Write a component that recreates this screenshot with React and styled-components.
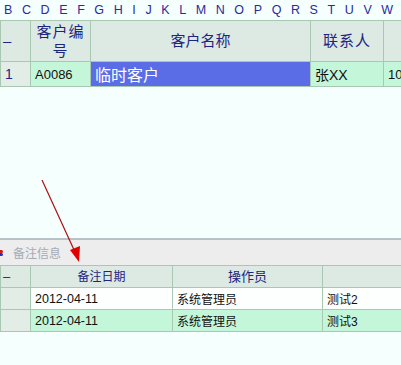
import React from 'react';
import styled, { createGlobalStyle } from 'styled-components';

const GlobalStyle = createGlobalStyle`
  html, body {
    margin: 0;
    padding: 0;
    background: #f5fffe;
    font-family: "Liberation Sans", Arial, "Noto Sans CJK SC", sans-serif;
  }
`;

const Page = styled.div`
  position: relative;
  width: 401px;
  height: 365px;
  overflow: hidden;
  background: #f5fffe;
  display: flex;
  flex-direction: column;
`;

const Letters = styled.div`
  height: 20px;
  display: flex;
  align-items: center;
  padding-left: 4px;
  gap: 9.6px;
  font-size: 12.5px;
  color: #2a2aa0;
  white-space: nowrap;
`;

const GridWrap = styled.div`
  width: 401px;
  overflow: hidden;
`;

const Table = styled.table`
  border-collapse: collapse;
  table-layout: fixed;
  width: ${p => p.width}px;
  font-family: "Liberation Sans", Arial, "Noto Sans CJK SC", sans-serif;
`;

const HeadCell = styled.th`
  height: ${p => p.h}px;
  padding: 0 2px;
  border: 1px solid #a9c8b1;
  background: #dde9e3;
  color: #1c2580;
  font-weight: normal;
  font-size: ${p => p.size}px;
  line-height: ${p => p.lh || 20}px;
  letter-spacing: ${p => p.ls || 0}px;
  text-align: ${p => p.align || 'center'};
  vertical-align: middle;
  overflow: hidden;
`;

const Cell = styled.td`
  height: ${p => p.h || 20}px;
  padding: 0 4px;
  border: 1px solid #a9c8b1;
  background: ${p => p.bg || 'transparent'};
  color: ${p => p.color || '#111'};
  font-size: ${p => p.size || 13}px;
  white-space: nowrap;
  overflow: hidden;
  vertical-align: middle;
`;

const Spacer = styled.div`
  flex: 1;
`;

const Panel = styled.div`
  height: 125px;
  border-top: 2px solid #b9c1c8;
  display: flex;
  flex-direction: column;
`;

const PanelHead = styled.div`
  height: 25px;
  flex-shrink: 0;
  background: #ecedec;
  display: flex;
  align-items: center;
  gap: 8px;
  font-size: 12px;
  color: #a4abb8;
  font-family: "Noto Sans CJK SC", sans-serif;
`;

const Dot = styled.span`
  width: 6px;
  height: 8px;
  margin-left: -1px;
  display: inline-flex;
  flex-direction: column;
  justify-content: center;
  & > i {
    display: block;
    height: 3px;
    width: 4px;
    border-radius: 0 2px 2px 0;
  }
`;

const Arrow = styled.svg`
  position: absolute;
  left: 0;
  top: 0;
  pointer-events: none;
`;

const MINT = '#c4f6da';
const GRAYCELL = '#e3ede8';
const BLUE = '#5a6de6';

export default function App() {
  const letters = 'BCDEFGHIJKLMNOPQRSTUVW'.split('');
  return (
    <Page>
      <GlobalStyle />
      <Letters>
        {letters.map(l => <span key={l}>{l}</span>)}
      </Letters>
      <GridWrap>
        <Table width={445}>
          <colgroup>
            <col style={{ width: 30 }} />
            <col style={{ width: 60 }} />
            <col style={{ width: 220 }} />
            <col style={{ width: 73 }} />
            <col style={{ width: 62 }} />
          </colgroup>
          <thead>
            <tr>
              <HeadCell h={40} size={15} align="left">–</HeadCell>
              <HeadCell h={40} size={15} lh={19} ls={1}>客户编号</HeadCell>
              <HeadCell h={40} size={15}>客户名称</HeadCell>
              <HeadCell h={40} size={15} ls={1}>联系人</HeadCell>
              <HeadCell h={40} size={15}></HeadCell>
            </tr>
          </thead>
          <tbody>
            <tr>
              <Cell bg={GRAYCELL} color="#1c2580" size={14}>1</Cell>
              <Cell bg={MINT} size={13}>A0086</Cell>
              <Cell bg={BLUE} color="#fff" size={16} style={{ fontFamily: '"Noto Sans CJK SC", sans-serif' }}>临时客户</Cell>
              <Cell bg={MINT} size={14}>张XX</Cell>
              <Cell bg={MINT} size={13}>10</Cell>
            </tr>
          </tbody>
        </Table>
      </GridWrap>
      <Spacer />
      <Panel>
        <PanelHead>
          <Dot><i style={{ background: '#d01818' }} /><i style={{ background: '#2036b0' }} /></Dot>
          备注信息
        </PanelHead>
        <Table width={401}>
          <colgroup>
            <col style={{ width: 30 }} />
            <col style={{ width: 142 }} />
            <col style={{ width: 150 }} />
            <col style={{ width: 79 }} />
          </colgroup>
          <thead>
            <tr>
              <HeadCell h={21} size={13} align="left">–</HeadCell>
              <HeadCell h={21} size={12}>备注日期</HeadCell>
              <HeadCell h={21} size={13}>操作员</HeadCell>
              <HeadCell h={21} size={12}></HeadCell>
            </tr>
          </thead>
          <tbody>
            <tr>
              <Cell h={21} bg={GRAYCELL} />
              <Cell h={21} bg="#fcfffe" size={12.5}>2012-04-11</Cell>
              <Cell h={21} bg="#fcfffe" size={12}>系统管理员</Cell>
              <Cell h={21} bg="#fcfffe" size={12}>测试2</Cell>
            </tr>
            <tr>
              <Cell h={21} bg={GRAYCELL} />
              <Cell h={21} bg={MINT} size={12.5}>2012-04-11</Cell>
              <Cell h={21} bg={MINT} size={12}>系统管理员</Cell>
              <Cell h={21} bg={MINT} size={12}>测试3</Cell>
            </tr>
          </tbody>
        </Table>
      </Panel>
      <Arrow width="401" height="365">
        <line x1="42" y1="180" x2="75" y2="252" stroke="#b01010" strokeWidth="1.2" />
        <polygon points="79,262 70,250 80,246" fill="#e00000" />
      </Arrow>
    </Page>
  );
}
